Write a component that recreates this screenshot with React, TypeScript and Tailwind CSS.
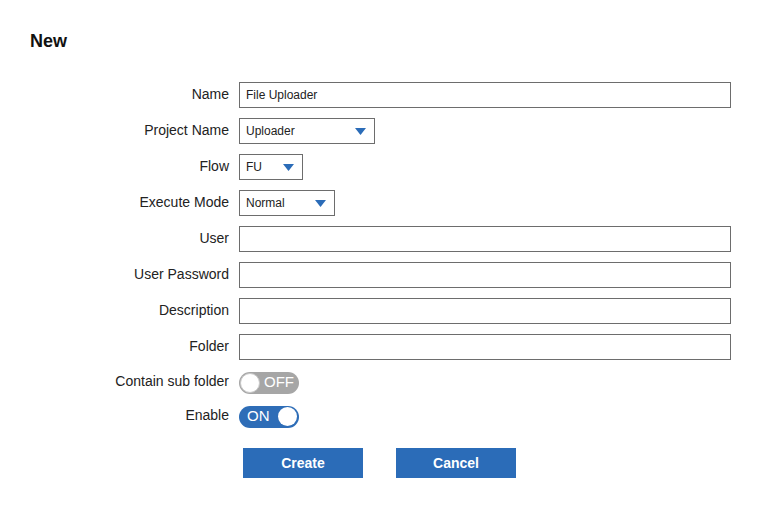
const FONT = { fontFamily: '"Liberation Sans", Arial, sans-serif' };

function Label({ children }: { children: React.ReactNode }) {
  return (
    <div className="w-[229px] shrink-0 pb-[2px] text-right text-[14px] text-[#222]">{children}</div>
  );
}

function TextInput({ value = "" }: { value?: string }) {
  return (
    <div className="ml-[10px] flex h-[26px] w-[492px] items-center border border-[#6d6d6d] px-[6px] text-[12px] text-[#222]">
      {value}
    </div>
  );
}

function Select({ value, width }: { value: string; width: string }) {
  return (
    <div
      className={`ml-[10px] flex h-[26px] items-center justify-between border border-[#6d6d6d] pl-[6px] pr-[8px] text-[12px] text-[#222] ${width}`}
    >
      <span>{value}</span>
      <svg width="11" height="7" viewBox="0 0 11 7">
        <polygon points="0,0 11,0 5.5,7" fill="#2b6cb8" />
      </svg>
    </div>
  );
}

function Toggle({ on }: { on: boolean }) {
  return on ? (
    <div className="ml-[10px] flex h-[22px] w-[60px] items-center justify-between rounded-full bg-[#2e6db7] pl-[8px] pr-[2px] text-[15px] text-white">
      <span>ON</span>
      <span className="h-[19px] w-[19px] rounded-full bg-white" />
    </div>
  ) : (
    <div className="ml-[10px] flex h-[22px] w-[60px] items-center justify-between rounded-full bg-[#a6a6a6] pl-[1px] pr-[5px] text-[15px] text-white">
      <span className="h-[20px] w-[20px] rounded-full border border-[#c8c8c8] bg-white" />
      <span>OFF</span>
    </div>
  );
}

export default function App() {
  return (
    <div className="h-[506px] w-[757px] bg-white" style={FONT}>
      <div className="px-[30px] pt-[31px]">
        <h1 className="text-[18px] font-bold leading-[20px] text-[#111]">New</h1>
      </div>

      <div className="mt-[31px] flex flex-col gap-[10px]">
        <div className="flex items-center">
          <Label>Name</Label>
          <TextInput value="File Uploader" />
        </div>
        <div className="flex items-center">
          <Label>Project Name</Label>
          <Select value="Uploader" width="w-[136px]" />
        </div>
        <div className="flex items-center">
          <Label>Flow</Label>
          <Select value="FU" width="w-[64px]" />
        </div>
        <div className="flex items-center">
          <Label>Execute Mode</Label>
          <Select value="Normal" width="w-[96px]" />
        </div>
        <div className="flex items-center">
          <Label>User</Label>
          <TextInput />
        </div>
        <div className="flex items-center">
          <Label>User Password</Label>
          <TextInput />
        </div>
        <div className="flex items-center">
          <Label>Description</Label>
          <TextInput />
        </div>
        <div className="flex items-center">
          <Label>Folder</Label>
          <TextInput />
        </div>
        <div className="mt-[1px] flex items-center">
          <Label>Contain sub folder</Label>
          <Toggle on={false} />
        </div>
        <div className="mt-[1px] flex items-center">
          <Label>Enable</Label>
          <Toggle on />
        </div>
      </div>

      <div className="ml-[243px] mt-[20px] flex gap-[33px]">
        <button className="h-[30px] w-[120px] bg-[#2b6cb8] text-[14px] font-bold text-white">Create</button>
        <button className="h-[30px] w-[120px] bg-[#2b6cb8] text-[14px] font-bold text-white">Cancel</button>
      </div>
    </div>
  );
}
